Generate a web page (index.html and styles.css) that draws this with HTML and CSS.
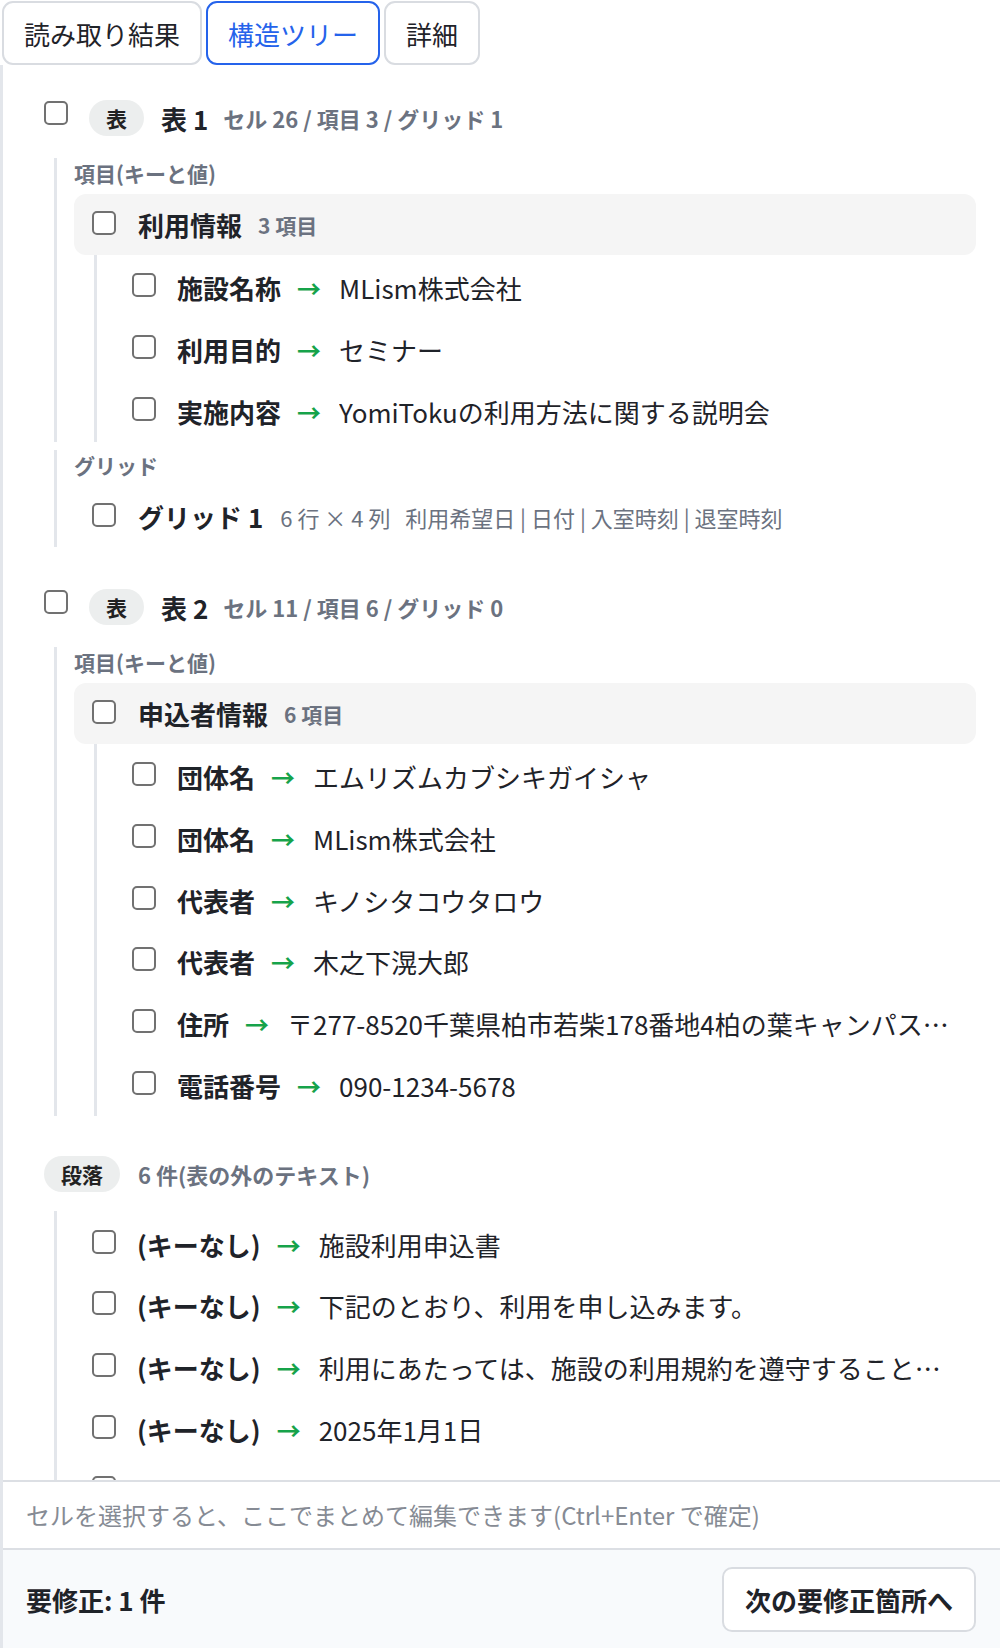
FILE: index.html
```html
<!DOCTYPE html>
<html lang="ja">
<head>
  <meta charset="UTF-8" />
  <title>構造ツリー</title>
  <link rel="stylesheet" href="styles.css">
</head>
<body>

<div class="tabs">
  <button class="tab">読み取り結果</button>
  <button class="tab active">構造ツリー</button>
  <button class="tab">詳細</button>
</div>

<div class="panel">
  <div class="tree">

    <!-- 表 1 -->
    <div class="table-block">
      <div class="table-head">
        <input type="checkbox" class="cb" />
        <span class="badge">表</span>
        <span class="table-title">表 1</span>
        <span class="meta">セル 26 / 項目 3 / グリッド 1</span>
      </div>

      <div class="section">
        <div class="section-label">項目(キーと値)</div>
        <div class="group">
          <input type="checkbox" class="cb" />
          <span class="group-name">利用情報</span>
          <span class="meta">3 項目</span>
        </div>
        <div class="items">
          <div class="item">
            <input type="checkbox" class="cb" />
            <span class="key">施設名称</span><span class="arrow">→</span><span class="value">MLism株式会社</span>
          </div>
          <div class="item">
            <input type="checkbox" class="cb" />
            <span class="key">利用目的</span><span class="arrow">→</span><span class="value">セミナー</span>
          </div>
          <div class="item">
            <input type="checkbox" class="cb" />
            <span class="key">実施内容</span><span class="arrow">→</span><span class="value">YomiTokuの利用方法に関する説明会</span>
          </div>
        </div>
      </div>

      <div class="section">
        <div class="section-label">グリッド</div>
        <div class="grid-row">
          <input type="checkbox" class="cb" />
          <span class="group-name">グリッド 1</span>
          <span class="grid-meta">6 行 × 4 列&nbsp;&nbsp;&nbsp;利用希望日 | 日付 | 入室時刻 | 退室時刻</span>
        </div>
      </div>
    </div>

    <!-- 表 2 -->
    <div class="table-block">
      <div class="table-head">
        <input type="checkbox" class="cb" />
        <span class="badge">表</span>
        <span class="table-title">表 2</span>
        <span class="meta">セル 11 / 項目 6 / グリッド 0</span>
      </div>

      <div class="section">
        <div class="section-label">項目(キーと値)</div>
        <div class="group">
          <input type="checkbox" class="cb" />
          <span class="group-name">申込者情報</span>
          <span class="meta">6 項目</span>
        </div>
        <div class="items">
          <div class="item">
            <input type="checkbox" class="cb" />
            <span class="key">団体名</span><span class="arrow">→</span><span class="value">エムリズムカブシキガイシャ</span>
          </div>
          <div class="item">
            <input type="checkbox" class="cb" />
            <span class="key">団体名</span><span class="arrow">→</span><span class="value">MLism株式会社</span>
          </div>
          <div class="item">
            <input type="checkbox" class="cb" />
            <span class="key">代表者</span><span class="arrow">→</span><span class="value">キノシタコウタロウ</span>
          </div>
          <div class="item">
            <input type="checkbox" class="cb" />
            <span class="key">代表者</span><span class="arrow">→</span><span class="value">木之下滉大郎</span>
          </div>
          <div class="item">
            <input type="checkbox" class="cb" />
            <span class="key">住所</span><span class="arrow">→</span><span class="value">〒277-8520千葉県柏市若柴178番地4柏の葉キャンパス148街区2 ショップ&amp;オフィス棟6階</span>
          </div>
          <div class="item">
            <input type="checkbox" class="cb" />
            <span class="key">電話番号</span><span class="arrow">→</span><span class="value">090-1234-5678</span>
          </div>
        </div>
      </div>
    </div>

    <!-- 段落 -->
    <div class="para-block">
      <div class="table-head">
        <span class="badge">段落</span>
        <span class="meta para-meta">6 件(表の外のテキスト)</span>
      </div>
      <div class="para-items">
        <div class="item">
          <input type="checkbox" class="cb" />
          <span class="key">(キーなし)</span><span class="arrow">→</span><span class="value">施設利用申込書</span>
        </div>
        <div class="item">
          <input type="checkbox" class="cb" />
          <span class="key">(キーなし)</span><span class="arrow">→</span><span class="value">下記のとおり、利用を申し込みます。</span>
        </div>
        <div class="item">
          <input type="checkbox" class="cb" />
          <span class="key">(キーなし)</span><span class="arrow">→</span><span class="value">利用にあたっては、施設の利用規約を遵守することを誓約します。</span>
        </div>
        <div class="item">
          <input type="checkbox" class="cb" />
          <span class="key">(キーなし)</span><span class="arrow">→</span><span class="value">2025年1月1日</span>
        </div>
        <div class="item">
          <input type="checkbox" class="cb" />
          <span class="key">(キーなし)</span><span class="arrow">→</span><span class="value">以上</span>
        </div>
        <div class="item">
          <input type="checkbox" class="cb" />
          <span class="key">(キーなし)</span><span class="arrow">→</span><span class="value">MLism株式会社</span>
        </div>
      </div>
    </div>

  </div>

  <div class="editor">
    <textarea placeholder="セルを選択すると、ここでまとめて編集できます(Ctrl+Enter で確定)"></textarea>
  </div>

  <div class="status">
    <span class="status-text">要修正: 1 件</span>
    <button class="next-btn">次の要修正箇所へ</button>
  </div>
</div>

</body>
</html>
```

FILE: styles.css
```css
/* Base */
* {
  box-sizing: border-box;
}
body {
  margin: 0;
  height: 1648px;
  display: flex;
  flex-direction: column;
  font-family: "Noto Sans CJK JP", "Noto Sans", sans-serif;
  color: #1f2329;
  background: #fff;
  overflow: hidden;
}

/* Tabs */
.tabs {
  display: flex;
  gap: 4px;
  padding: 1px 0 0 2px;
  flex-shrink: 0;
}
.tab {
  height: 64px;
  padding: 0 20px;
  font-family: inherit;
  font-size: 26px;
  color: #1f2329;
  background: #fff;
  border: 2px solid #d9dce1;
  border-radius: 11px;
  cursor: pointer;
}
.tab.active {
  color: #2563eb;
  border-color: #2563eb;
}

/* Panel */
.panel {
  flex: 1;
  display: flex;
  flex-direction: column;
  border-left: 3px solid #e3e6eb;
  min-height: 0;
}
.tree {
  flex: 1;
  overflow: hidden;
  padding: 35px 24px 0 41px;
}

/* Checkbox */
.cb {
  appearance: none;
  width: 24px;
  height: 24px;
  margin: 0;
  flex-shrink: 0;
  border: 2px solid #717171;
  border-radius: 5px;
  background: #fff;
}

/* Table header */
.table-block + .table-block {
  margin-top: 42px;
}
.table-head {
  display: flex;
  align-items: center;
  height: 36px;
}
.table-head .cb {
  align-self: flex-start;
  margin-top: 1px;
  margin-right: 21px;
}
.badge {
  height: 36px;
  line-height: 36px;
  padding: 0 17px;
  border-radius: 18px;
  background: #eceeee;
  font-size: 21px;
  font-weight: bold;
  color: #222;
}
.table-title {
  margin-left: 17px;
  font-size: 26px;
  font-weight: bold;
}
.meta {
  margin-left: 15px;
  font-size: 22px;
  font-weight: bold;
  color: #6b7280;
}

/* Sections */
.section {
  margin: 22px 0 0 10px;
  border-left: 3px solid #e3e6eb;
  padding-left: 17px;
}
.section + .section {
  margin-top: 8px;
}
.section-label {
  line-height: 30px;
  margin-bottom: 6px;
  font-size: 21px;
  font-weight: bold;
  color: #6b7280;
}
.group,
.grid-row {
  display: flex;
  align-items: center;
  height: 61px;
  padding: 0 18px;
  border-radius: 12px;
}
.group {
  background: #f5f5f5;
}
.group .cb,
.grid-row .cb {
  margin-right: 22px;
  margin-bottom: 3px;
}
.group-name {
  font-size: 26px;
  font-weight: bold;
}
.group .meta {
  margin-left: 16px;
  font-size: 21px;
}
.grid-meta {
  margin-left: 17px;
  font-size: 22px;
  color: #6b7280;
  white-space: nowrap;
}

/* Key/value rows */
.items {
  margin-left: 20px;
  border-left: 3px solid #e3e6eb;
  padding: 2px 26px 0 35px;
}
.item {
  display: flex;
  align-items: center;
  height: 61.7px;
  font-size: 26px;
  white-space: nowrap;
}
.item .cb {
  margin-right: 21px;
  margin-bottom: 5px;
}
.key {
  font-weight: bold;
  flex-shrink: 0;
}
.arrow {
  margin: 0 18px 0 16px;
  font-size: 24px;
  font-weight: bold;
  color: #16a34a;
  flex-shrink: 0;
}
.value {
  min-width: 0;
  overflow: hidden;
  text-overflow: ellipsis;
}

/* Paragraphs */
.para-block {
  margin-top: 40px;
}
.para-meta {
  margin-left: 18px;
}
.para-items {
  margin: 19px 0 0 10px;
  border-left: 3px solid #e3e6eb;
  padding: 2px 26px 0 35px;
}

/* Footer editor */
.editor {
  flex-shrink: 0;
  border-top: 2px solid #dcdfe4;
  border-bottom: 2px solid #dcdfe4;
}
.editor textarea {
  display: block;
  width: 100%;
  height: 66px;
  padding: 18px 23px 0;
  border: none;
  resize: none;
  font-family: inherit;
  font-size: 24px;
  line-height: 30px;
  outline: none;
}
.editor textarea::placeholder {
  color: #868b94;
}

/* Status bar */
.status {
  flex-shrink: 0;
  height: 98px;
  display: flex;
  align-items: center;
  justify-content: space-between;
  padding: 0 24px 0 23px;
  background: #f8fafc;
}
.status-text {
  font-size: 26px;
  font-weight: bold;
}
.next-btn {
  height: 65px;
  padding: 0 21px;
  font-family: inherit;
  font-size: 26px;
  font-weight: bold;
  color: #1f2329;
  background: #fff;
  border: 2px solid #d9dce1;
  border-radius: 10px;
  cursor: pointer;
}
```
